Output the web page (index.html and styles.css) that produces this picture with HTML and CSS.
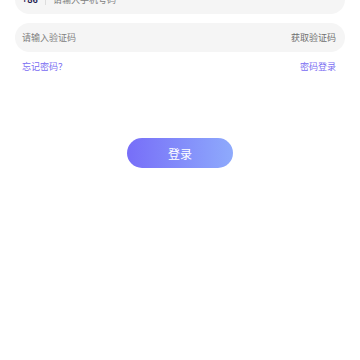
FILE: index.html
```html
<!DOCTYPE html>
<html lang="zh-CN">
<head>
  <meta charset="UTF-8" />
  <meta name="viewport" content="width=device-width, initial-scale=1.0"/>
  <title>登录</title>
  <link rel="stylesheet" href="styles.css">
</head>
<body>
  <div class="form">
    <div class="field">
      <span class="code">+86</span>
      <span class="sep"></span>
      <span class="placeholder">请输入手机号码</span>
    </div>
    <div class="field">
      <span class="placeholder">请输入验证码</span>
      <span class="action">获取验证码</span>
    </div>
    <div class="links">
      <a class="link">忘记密码？</a>
      <a class="link">密码登录</a>
    </div>
    <div class="actions">
      <button class="login">登录</button>
    </div>
  </div>
</body>
</html>
```

FILE: styles.css
```css
body {
  margin: 0;
  background: #fff;
  font-family: "Noto Sans CJK SC", "Noto Sans", sans-serif;
}
.form {
  margin-top: -15px;
  padding: 0 15px;
}
.field {
  display: flex;
  align-items: center;
  height: 29px;
  padding: 0 9px 0 7px;
  margin-bottom: 9px;
  background: #f5f5f5;
  border-radius: 15px;
  font-size: 9px;
}
.code {
  color: #1f2152;
  font-weight: bold;
}
.sep {
  width: 1px;
  height: 10px;
  background: #ddd;
  margin: 0 7px;
}
.placeholder {
  flex: 1;
  color: #808080;
}
.action {
  color: #707070;
}
.links {
  display: flex;
  justify-content: space-between;
  padding: 0 9px 0 7px;
  margin-top: -1px;
  font-size: 9px;
  line-height: 14px;
}
.link {
  color: #7a6cf2;
}
.actions {
  display: flex;
  justify-content: center;
  margin-top: 64px;
}
.login {
  width: 106px;
  height: 30px;
  border: none;
  border-radius: 15px;
  background: linear-gradient(90deg, #776ef8, #8eaafc);
  color: #fff;
  font-family: inherit;
  font-size: 12px;
}
```
